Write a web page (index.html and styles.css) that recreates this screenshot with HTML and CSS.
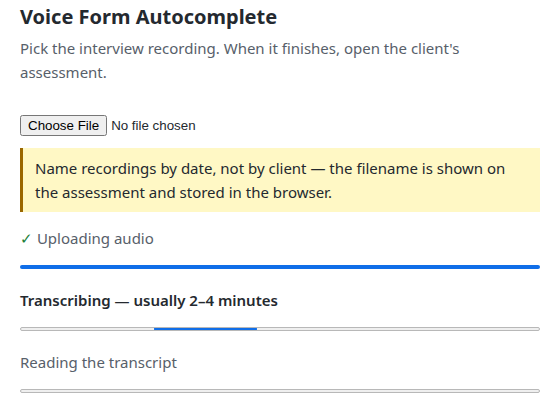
FILE: index.html
```html
<!DOCTYPE html>
<html lang="en">
<head>
<meta charset="utf-8">
<title>Voice Form Autocomplete</title>
<link rel="stylesheet" href="styles.css">
</head>
<body>
<main class="page">
  <h1 class="title">Voice Form Autocomplete</h1>
  <p class="intro">Pick the interview recording. When it finishes, open the client's assessment.</p>
  <div class="picker"><input type="file" accept="audio/*"></div>
  <div class="note">Name recordings by date, not by client — the filename is shown on the assessment and stored in the browser.</div>
  <ol class="steps">
    <li class="step done">
      <div class="label"><span class="check">✓</span> Uploading audio</div>
      <div class="bar full"><div class="fill"></div></div>
    </li>
    <li class="step active">
      <div class="label">Transcribing — usually 2–4 minutes</div>
      <div class="bar"><div class="seg"></div></div>
    </li>
    <li class="step">
      <div class="label">Reading the transcript</div>
      <div class="bar"></div>
    </li>
  </ol>
</main>
</body>
</html>
```

FILE: styles.css
```css
html, body {
  margin: 0;
  padding: 0;
  background: #ffffff;
}
.page {
  padding: 0 20px;
  font-family: "Noto Sans", "Open Sans", sans-serif;
  color: #24292f;
}
.title {
  margin: 0;
  padding-top: 3px;
  font-size: 20px;
  line-height: 27px;
  font-weight: 700;
  color: #24292f;
}
.intro {
  margin: 6px 0 0;
  font-size: 15px;
  line-height: 24px;
  color: #57606a;
}
.picker {
  margin-top: 29px;
  height: 20px;
}
.picker input {
  font-family: "Liberation Sans", Arial, sans-serif;
  font-size: 13.333px;
}
.note {
  margin-top: 15px;
  background: #fff8c5;
  border-left: 3px solid #9a6700;
  padding: 8px 12px;
  font-size: 15px;
  line-height: 24px;
  color: #24292f;
}
.steps {
  list-style: none;
  margin: 14px 0 0;
  padding: 0;
  display: flex;
  flex-direction: column;
  gap: 19px;
}
.step {
  display: flex;
  flex-direction: column;
  gap: 15px;
}
.label {
  font-size: 15px;
  line-height: 24px;
  color: #57606a;
}
.step.active .label {
  font-weight: 600;
  color: #24292f;
}
.check {
  color: #1a7f37;
}
.bar {
  position: relative;
  height: 4px;
  box-sizing: border-box;
  background: #efefef;
  border: 1px solid #b8b8b8;
  border-radius: 2px;
  overflow: hidden;
}
.bar.full {
  border: none;
  background: #106ee8;
}
.seg {
  position: absolute;
  left: 25.6%;
  width: 20%;
  top: -1px;
  bottom: -1px;
  background: #106ee8;
  border-radius: 2px;
}
```
